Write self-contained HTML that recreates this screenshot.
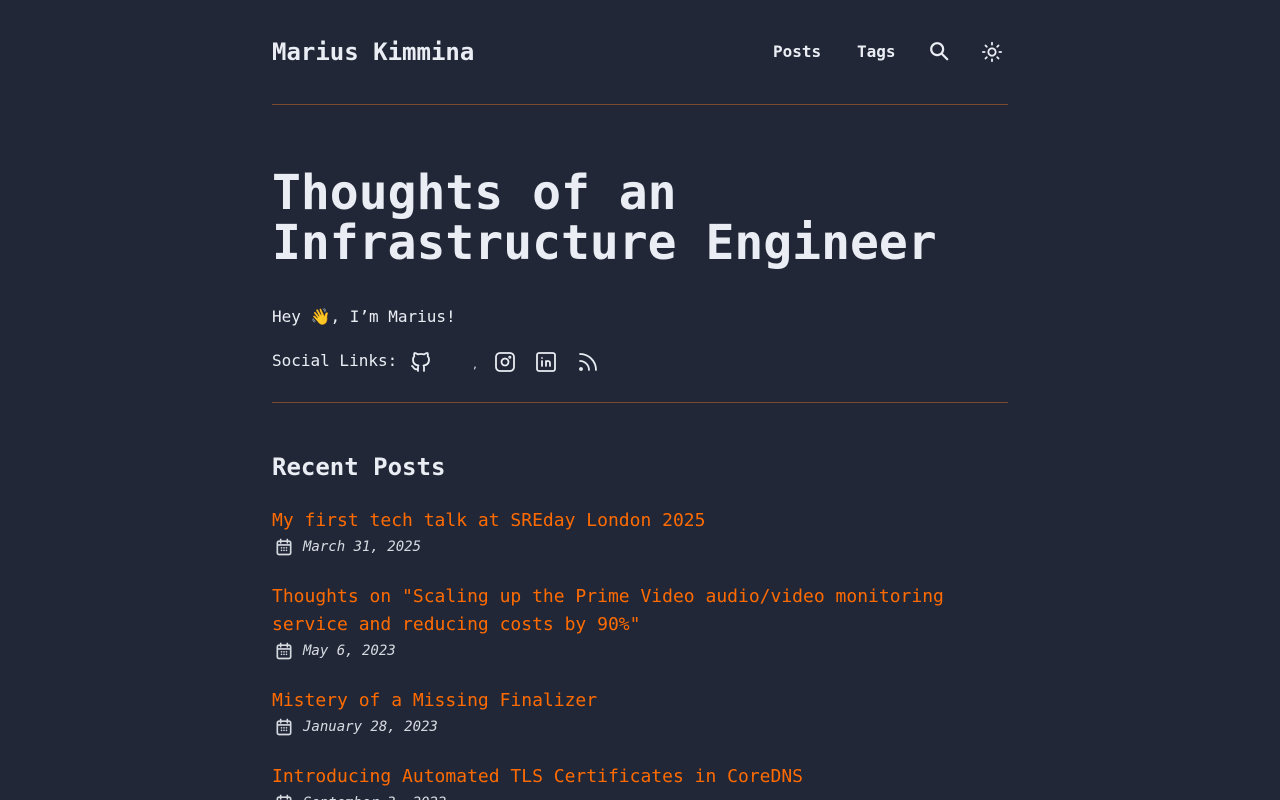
<!DOCTYPE html>
<html><head><meta charset="utf-8"><style>
html,body{margin:0;height:800px;overflow:hidden}
body{background:#212737;color:#eaedf3;font-family:"DejaVu Sans Mono","Liberation Mono",monospace}
.w{width:736px;margin:0 auto;position:relative}
a{color:inherit;text-decoration:none}
.hdr{height:104px;border-bottom:1px solid #7a4a30;position:relative}
.logo{position:absolute;left:0;top:36px;font-size:24px;font-weight:bold;line-height:32px}
.nav{position:absolute;top:41px;font-size:16px;font-weight:bold;line-height:22px}
h1{font-size:48px;line-height:50px;margin:0;position:absolute;top:168px;left:0;font-weight:bold}
.hey{position:absolute;top:306px;font-size:16px;line-height:22px}
.soc{position:absolute;top:350px;font-size:16px;line-height:22px}
.ic{position:absolute;top:350px}
.hr2{position:absolute;top:402px;left:0;width:736px;border-top:1px solid #7a4a30}
h2{position:absolute;top:452px;margin:0;font-size:24px;line-height:30px}
.p{position:absolute;left:0;width:736px}
.p a{color:#ff6b01;font-size:18px;line-height:28px;display:block}
.d{font-size:14px;font-style:italic;line-height:20px;padding-left:31px;position:relative;color:#eaedf3;opacity:.9;margin-top:2px}
.d svg{position:absolute;left:2px;top:0px}
</style></head><body><div class="w">
<div class="hdr">
<div class="logo">Marius Kimmina</div>
<div class="nav" style="left:501px">Posts</div>
<div class="nav" style="left:585px">Tags</div>
<svg style="position:absolute;left:656px;top:40px" width="22" height="22" viewBox="0 0 24 24" fill="none" stroke="#eaedf3" stroke-width="2.4" stroke-linecap="round"><circle cx="10" cy="10" r="6.5"/><path d="M15 15l6 6"/></svg>
<svg style="position:absolute;left:709px;top:41px" width="22" height="22" viewBox="0 0 24 24" fill="none" stroke="#eaedf3" stroke-width="2" stroke-linecap="round"><circle cx="12" cy="12" r="4"/><path d="M12 2v2M12 20v2M2 12h2M20 12h2M4.9 4.9l1.4 1.4M17.7 17.7l1.4 1.4M4.9 19.1l1.4-1.4M17.7 6.3l1.4-1.4"/></svg>
</div>
<h1>Thoughts of an<br>Infrastructure Engineer</h1>
<div class="hey">Hey 👋, I’m Marius!</div>
<div class="soc">Social Links:</div>
<svg class="ic" style="left:137px" width="24" height="24" viewBox="0 0 24 24" fill="none" stroke="#eaedf3" stroke-width="1.8" stroke-linecap="round" stroke-linejoin="round"><path d="M9 19c-4.3 1.4-4.3-2.5-6-3m12 5v-3.5c0-1 .1-1.4-.5-2 2.8-.3 5.5-1.4 5.5-6a4.6 4.6 0 0 0-1.3-3.2 4.2 4.2 0 0 0-.1-3.2s-1.1-.3-3.5 1.3a12.3 12.3 0 0 0-6.2 0C6.5 2.8 5.4 3.1 5.4 3.1a4.2 4.2 0 0 0-.1 3.2A4.6 4.6 0 0 0 4 9.5c0 4.6 2.7 5.7 5.5 6-.6.6-.6 1.2-.5 2V21"/></svg>
<div style="position:absolute;left:200px;top:360px;font-size:10px;color:#eaedf3">,</div>
<svg class="ic" style="left:221px" width="24" height="24" viewBox="0 0 24 24" fill="none" stroke="#eaedf3" stroke-width="1.8"><rect x="3" y="3" width="18" height="18" rx="4"/><circle cx="12" cy="12" r="3.5"/><circle cx="16.8" cy="7.2" r=".6"/></svg>
<svg class="ic" style="left:262px" width="24" height="24" viewBox="0 0 24 24" fill="none" stroke="#eaedf3" stroke-width="1.8" stroke-linecap="round"><rect x="3" y="3" width="18" height="18" rx="2"/><path d="M8 11v5M8 8v.01M12 16v-5M16 16v-3a2 2 0 0 0-4 0"/></svg>
<svg class="ic" style="left:304px" width="24" height="24" viewBox="0 0 24 24" fill="none" stroke="#eaedf3" stroke-width="1.8" stroke-linecap="round"><circle cx="5" cy="19" r="1"/><path d="M4 4a16 16 0 0 1 16 16M4 11a9 9 0 0 1 9 9"/></svg>
<div class="hr2"></div>
<h2>Recent Posts</h2>
<div class="p" style="top:507px"><a>My first tech talk at SREday London 2025</a><div class="d"><svg width="20" height="20" viewBox="0 0 24 24" fill="none" stroke="#eaedf3" stroke-width="2" stroke-linecap="round"><rect x="4" y="5" width="16" height="16" rx="2"/><path d="M8 3v4M16 3v4M4 9.5h16M9 13h.01M12 13h.01M15 13h.01M9 16h.01M12 16h.01M15 16h.01"/></svg>March 31, 2025</div></div>
<div class="p" style="top:583px"><a>Thoughts on "Scaling up the Prime Video audio/video monitoring service and reducing costs by 90%"</a><div class="d"><svg width="20" height="20" viewBox="0 0 24 24" fill="none" stroke="#eaedf3" stroke-width="2" stroke-linecap="round"><rect x="4" y="5" width="16" height="16" rx="2"/><path d="M8 3v4M16 3v4M4 9.5h16M9 13h.01M12 13h.01M15 13h.01M9 16h.01M12 16h.01M15 16h.01"/></svg>May 6, 2023</div></div>
<div class="p" style="top:687px"><a>Mistery of a Missing Finalizer</a><div class="d"><svg width="20" height="20" viewBox="0 0 24 24" fill="none" stroke="#eaedf3" stroke-width="2" stroke-linecap="round"><rect x="4" y="5" width="16" height="16" rx="2"/><path d="M8 3v4M16 3v4M4 9.5h16M9 13h.01M12 13h.01M15 13h.01M9 16h.01M12 16h.01M15 16h.01"/></svg>January 28, 2023</div></div>
<div class="p" style="top:763px"><a>Introducing Automated TLS Certificates in CoreDNS</a><div class="d"><svg width="20" height="20" viewBox="0 0 24 24" fill="none" stroke="#eaedf3" stroke-width="2" stroke-linecap="round"><rect x="4" y="5" width="16" height="16" rx="2"/><path d="M8 3v4M16 3v4M4 9.5h16M9 13h.01M12 13h.01M15 13h.01M9 16h.01M12 16h.01M15 16h.01"/></svg>September 3, 2022</div></div>
</div></body></html>
